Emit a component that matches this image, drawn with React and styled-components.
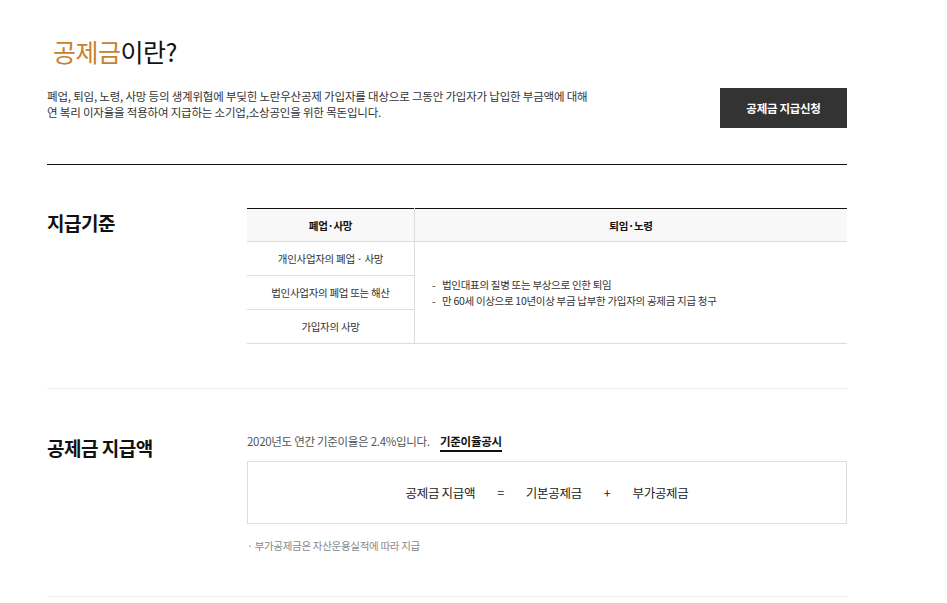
import React from "react";
import styled, { createGlobalStyle } from "styled-components";

const GlobalStyle = createGlobalStyle`
  body {
    margin: 0;
    background: #fff;
    font-family: "Noto Sans CJK KR", "Noto Sans", sans-serif;
    color: #222;
  }
`;

// page
const Page = styled.div`
  width: 800px;
  margin-left: 47px;
`;

// intro
const Intro = styled.div`
  padding-top: 33px;
  padding-bottom: 36px;
  border-bottom: 1px solid #111;
`;
const Title = styled.h2`
  margin: 0 0 0 6px;
  font-size: 25px;
  line-height: 36px;
  font-weight: 400;
  color: #111;
  letter-spacing: -0.5px;
`;
const Accent = styled.span`
  color: #c8812f;
`;
const IntroRow = styled.div`
  display: flex;
  justify-content: space-between;
  align-items: flex-start;
  margin-top: 19px;
`;
const Desc = styled.p`
  margin: 0;
  font-size: 11.5px;
  line-height: 16px;
  color: #333;
  letter-spacing: -0.2px;
`;
const ApplyButton = styled.button`
  width: 127px;
  height: 40px;
  border: 0;
  background: #333;
  color: #fff;
  font-family: inherit;
  font-size: 11.5px;
  font-weight: 700;
  letter-spacing: -0.3px;
  cursor: pointer;
`;

// sections
const Section = styled.section`
  display: grid;
  grid-template-columns: 200px 1fr;
  padding: ${(p) => p.$top}px 0 ${(p) => p.$bottom}px;
  border-bottom: 1px solid #ececec;
`;
const SectionTitle = styled.h3`
  margin: 0;
  font-size: 19px;
  line-height: 30px;
  font-weight: 700;
  color: #111;
  letter-spacing: -0.5px;
`;

// table
const Table = styled.table`
  width: 100%;
  border-collapse: collapse;
  border-top: 1px solid #111;
  font-size: 10.5px;
  letter-spacing: -0.3px;
`;
const Th = styled.th`
  height: 32px;
  padding: 0;
  background: #f8f8f8;
  font-weight: 700;
  color: #111;
  border-bottom: 1px solid #ddd;
  border-left: ${(p) => (p.$divided ? "1px solid #ddd" : "0")};
  width: ${(p) => p.$w || "auto"};
`;
const Td = styled.td`
  height: 33px;
  padding: 0;
  text-align: center;
  color: #333;
  border-bottom: 1px solid #ddd;
`;
const ListCell = styled.td`
  padding: 0 0 0 17px;
  text-align: left;
  vertical-align: middle;
  border-left: 1px solid #ddd;
  border-bottom: 1px solid #ddd;
  color: #333;
`;
const DashList = styled.ul`
  margin: 0;
  padding: 0;
  list-style: none;
  li {
    line-height: 16px;
  }
  li::before {
    content: "-";
    display: inline-block;
    width: 10px;
  }
`;

// amount
const RateLine = styled.div`
  font-size: 11.5px;
  line-height: 16px;
  color: #555;
  letter-spacing: -0.3px;
`;
const RateLink = styled.a`
  margin-left: 8px;
  color: #111;
  font-weight: 700;
  text-decoration: none;
  border-bottom: 2px solid #111;
  padding-bottom: 1px;
`;
const FormulaBox = styled.div`
  display: flex;
  justify-content: center;
  align-items: center;
  gap: 22px;
  height: 61px;
  margin-top: 12px;
  border: 1px solid #ddd;
  font-size: 12.5px;
  color: #222;
  letter-spacing: -0.3px;
`;
const Note = styled.p`
  margin: 14px 0 0;
  font-size: 10.5px;
  line-height: 16px;
  color: #888;
  letter-spacing: -0.3px;
`;

const rows = ["개인사업자의 폐업 · 사망", "법인사업자의 폐업 또는 해산", "가입자의 사망"];

export default function App() {
  return (
    <>
      <GlobalStyle />
      <Page>
        <Intro>
          <Title>
            <Accent>공제금</Accent>이란?
          </Title>
          <IntroRow>
            <Desc>
              폐업, 퇴임, 노령, 사망 등의 생계위협에 부딪힌 노란우산공제 가입자를 대상으로 그동안 가입자가 납입한 부금액에 대해
              <br />
              연 복리 이자율을 적용하여 지급하는 소기업,소상공인을 위한 목돈입니다.
            </Desc>
            <ApplyButton>공제금 지급신청</ApplyButton>
          </IntroRow>
        </Intro>

        <Section $top={43} $bottom={44}>
          <SectionTitle>지급기준</SectionTitle>
          <Table>
            <thead>
              <tr>
                <Th $w="167px">폐업·사망</Th>
                <Th $divided>퇴임·노령</Th>
              </tr>
            </thead>
            <tbody>
              {rows.map((r, i) => (
                <tr key={r}>
                  <Td>{r}</Td>
                  {i === 0 && (
                    <ListCell rowSpan={3}>
                      <DashList>
                        <li>법인대표의 질병 또는 부상으로 인한 퇴임</li>
                        <li>만 60세 이상으로 10년이상 부금 납부한 가입자의 공제금 지급 청구</li>
                      </DashList>
                    </ListCell>
                  )}
                </tr>
              ))}
            </tbody>
          </Table>
        </Section>

        <Section $top={44} $bottom={42}>
          <SectionTitle>공제금 지급액</SectionTitle>
          <div>
            <RateLine>
              2020년도 연간 기준이율은 2.4%입니다. <RateLink href="#">기준이율공시</RateLink>
            </RateLine>
            <FormulaBox>
              <span>공제금 지급액</span>
              <span>=</span>
              <span>기본공제금</span>
              <span>+</span>
              <span>부가공제금</span>
            </FormulaBox>
            <Note>· 부가공제금은 자산운용실적에 따라 지급</Note>
          </div>
        </Section>
      </Page>
    </>
  );
}
